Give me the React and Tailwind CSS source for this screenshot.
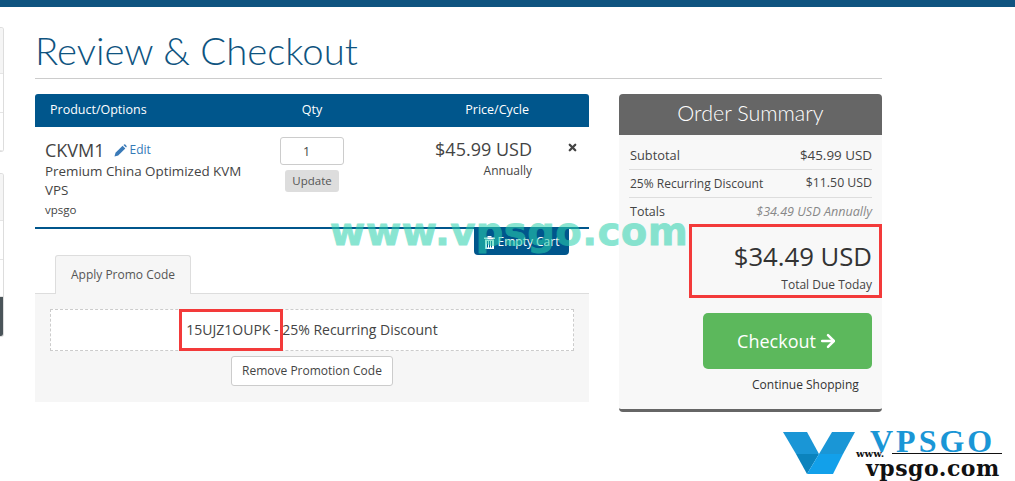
import React from "react";
import { X, ArrowRight } from "lucide-react";

function SideStub({ rows, dark }) {
  return (
    <div className="w-[4px] border border-l-0 border-[#ddd] rounded-r-[3px] bg-white overflow-hidden">
      {rows.map((h, i) => (
        <div key={i} className={`border-b border-[#e5e5e5] ${i === 0 ? "bg-[#f5f5f5]" : "bg-white"}`} style={{ height: h }} />
      ))}
      {dark && <div className="h-[39px] bg-[#4a5459]" />}
    </div>
  );
}

function SummaryRow({ label, value, last, labelClass, valueClass }) {
  return (
    <div className={`flex justify-between items-center h-[28px] text-[#444] ${last ? "" : "border-b border-[#ddd]"}`}>
      <span className={labelClass}>{label}</span>
      <span className={valueClass}>{value}</span>
    </div>
  );
}

export default function App() {
  return (
    <div className="relative w-[1015px] h-[481px] bg-white overflow-hidden font-['Open_Sans',sans-serif] text-[#444]">
      <div className="h-[7px] bg-[#0f5480]" />

      <div className="flex">
        {/* cut-off sidebar on the left */}
        <div className="w-[35px] flex flex-col gap-[21px] pt-[20px]">
          <SideStub rows={[46, 39, 38]} />
          <SideStub rows={[47, 39, 37]} dark />
        </div>

        <div className="w-[847px]">
          <h1 className="pt-[20px] h-[72px] border-b border-[#ccc] text-[38.3px] leading-[47px] font-light text-[#0f5480] font-['Lato',sans-serif]">
            Review &amp; Checkout
          </h1>

          <div className="flex justify-between pt-[15px]">
            {/* cart */}
            <div className="w-[554px]">
              <div className="flex items-center h-[33px] bg-[#00568c] rounded-t-[3px] text-white text-[12.5px] font-medium">
                <div className="w-[218px] pl-[15px]">Product/Options</div>
                <div className="w-[119px] text-center pr-[1px]">Qty</div>
                <div className="w-[157px] text-right">Price/Cycle</div>
              </div>

              <div className="flex h-[102px] border-b-2 border-[#00568c]">
                <div className="w-[218px] pl-[10px] pt-[11px]">
                  <div className="flex items-center">
                    <span className="text-[18px] leading-[24px]">CKVM1</span>
                    <svg className="ml-[9px] mt-[1px]" width="13" height="13" viewBox="0 0 13 13">
                      <path d="M0.5 12.5 L1.5 8.8 L8.6 1.7 L11.3 4.4 L4.2 11.5 Z" fill="#3a7ab8" />
                      <path d="M9.4 0.9 L10.2 0.4 Q10.8 0.1 11.3 0.6 L12.4 1.7 Q12.9 2.2 12.6 2.8 L12.1 3.6 Z" fill="#3a7ab8" />
                    </svg>
                    <span className="ml-[3px] text-[12px] text-[#337ab7]">Edit</span>
                  </div>
                  <div className="text-[13.4px] leading-[19px]">Premium China Optimized KVM VPS</div>
                  <div className="text-[11.5px] leading-[19px]">vpsgo</div>
                </div>

                <div className="w-[119px] flex flex-col items-center pt-[10px] pr-[1px]">
                  <div className="w-[64px] h-[28px] border border-[#ccc] rounded-[3px] text-[12.5px] leading-[28px] pl-[22px]">1</div>
                  <div className="mt-[5px] w-[54px] h-[22px] bg-[#ddd] rounded-[3px] text-[11.5px] leading-[22px] text-center text-[#555]">Update</div>
                </div>

                <div className="w-[160px] pt-[10px] text-right">
                  <div className="text-[18px] leading-[24px]">$45.99 USD</div>
                  <div className="text-[12px] leading-[18px] mt-[1px]">Annually</div>
                </div>

                <div className="pl-[35px] pt-[15px]">
                  <X className="w-[11px] h-[11px] text-[#444]" strokeWidth={5} />
                </div>
              </div>

              <div className="flex justify-end pr-[20px]">
                <div className="flex items-center justify-center w-[95px] h-[26px] bg-[#00568c] rounded-b-[4px] text-white text-[12px]">
                  <svg className="mr-[3px]" width="11" height="13" viewBox="0 0 11 13" fill="white">
                    <rect x="3.5" y="0" width="4" height="1.5" />
                    <rect x="0" y="1.5" width="11" height="1.5" />
                    <path d="M1 3.5 H10 V13 H1 Z M3 5 V11.5 H4 V5 Z M5 5 V11.5 H6 V5 Z M7 5 V11.5 H8 V5 Z" fillRule="evenodd" />
                  </svg>
                  Empty Cart
                </div>
              </div>

              {/* promo tabs */}
              <div className="h-[39px] pl-[21px] border-b border-[#ddd]">
                <div className="w-[136px] h-[39px] border border-b-0 border-[#ddd] rounded-t-[3px] bg-[#f6f6f6] text-[12px] leading-[38px] text-center text-[#555] -ml-[1px]">
                  Apply Promo Code
                </div>
              </div>
              <div className="h-[108px] bg-[#f6f6f6] px-[15px] pt-[15px]">
                <div className="h-[42px] border border-dashed border-[#ccc] bg-white text-[14px] leading-[40px] text-center text-[#444]">
                  15UJZ1OUPK - 25% Recurring Discount
                </div>
                <div className="flex justify-center mt-[5px]">
                  <div className="w-[162px] h-[30px] border border-[#ccc] rounded-[3px] bg-white text-[12px] leading-[28px] text-center">
                    Remove Promotion Code
                  </div>
                </div>
              </div>
            </div>

            {/* order summary */}
            <div className="w-[263px] h-[318px] rounded-[4px] overflow-hidden bg-[#f8f8f8] border-b-[3px] border-[#666]">
              <div className="h-[41px] bg-[#666] text-white text-center text-[21.5px] leading-[39px] font-light font-['Lato',sans-serif]">
                Order Summary
              </div>
              <div className="px-[10px] pt-[7px]">
                <SummaryRow label="Subtotal" value="$45.99 USD" labelClass="text-[12.8px] pl-[1px]" valueClass="text-[13.4px]" />
                <SummaryRow label="25% Recurring Discount" value="$11.50 USD" labelClass="text-[12px] pl-[1px]" valueClass="text-[12.3px]" />
                <SummaryRow label="Totals" value="$34.49 USD Annually" labelClass="text-[12.5px] pl-[1px]" valueClass="text-[12.6px] italic text-[#888]" last />
                <div className="text-right pt-[13px]">
                  <div className="text-[25.7px] leading-[36px] text-[#333]">$34.49 USD</div>
                  <div className="text-[12px] leading-[16px] mt-[2px]">Total Due Today</div>
                </div>
                <div className="flex justify-end mt-[20px]">
                  <div className="flex items-center justify-center w-[169px] h-[56px] bg-[#5cb85c] rounded-[5px] text-white text-[18px]">
                    Checkout
                    <ArrowRight className="w-[20px] h-[20px] ml-[2px]" strokeWidth={3} />
                  </div>
                </div>
                <div className="text-[12px] leading-[18px] mt-[7px] pl-[123px] text-[#333]">Continue Shopping</div>
              </div>
            </div>
          </div>
        </div>
      </div>

      {/* red annotation boxes */}
      <div className="absolute left-[179px] top-[309px] w-[104px] h-[42px] border-[3px] border-[#f33a3a]" />
      <div className="absolute left-[689px] top-[224px] w-[193px] h-[74px] border-[3px] border-[#f33a3a]" />

      {/* watermark, see-through so the button text shows under it */}
      <div className="absolute left-[330px] top-[209px] text-[38px] leading-[46px] font-bold font-['DejaVu_Sans',sans-serif] text-[#2ad1ad] [-webkit-text-stroke:1px_#2ad1ad] opacity-55 tracking-[0.8px] whitespace-nowrap">
        www.vpsgo.com
      </div>

      {/* logo */}
      <svg className="absolute left-[783px] top-[432px]" width="73" height="42" viewBox="0 0 73 42">
        <polygon points="0,0 24,0 36,22 13,22" fill="#1a96d6" />
        <polygon points="13,22 36,22 24,42" fill="#0b83bd" />
        <polygon points="36,22 49,0 72,0 60,22" fill="#1a96d6" />
        <polygon points="36,22 60,22 50,42 24,42" fill="#12a0ea" />
      </svg>
      <div className="absolute left-[870px] top-[424px] text-[32px] leading-[34px] font-bold font-['Liberation_Serif',serif] text-[#1a96d6] tracking-[3px] whitespace-nowrap">VPSGO</div>
      <div className="absolute left-[856px] top-[448px] text-[10px] leading-[12px] font-bold font-['DejaVu_Serif',serif] text-[#111]">www.</div>
      <div className="absolute left-[892px] top-[453px] w-[110px] h-[1px] bg-[#111]" />
      <div className="absolute left-[866px] top-[456px] text-[22px] leading-[24px] font-bold font-['DejaVu_Serif',serif] text-[#111] tracking-[0.5px] whitespace-nowrap">vpsgo.com</div>
    </div>
  );
}
